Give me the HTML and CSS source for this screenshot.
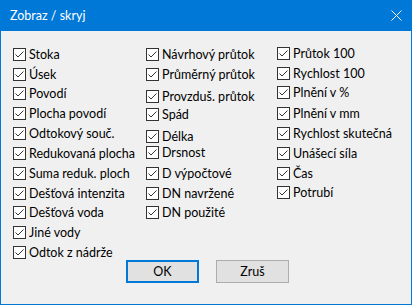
FILE: index.html
```html
<!DOCTYPE html>
<html>
<head>
<meta charset="utf-8">
<link rel="stylesheet" href="styles.css">
</head>
<body>
<div class="window">
  <div class="titlebar">
    <span class="title">Zobraz / skryj</span>
    <svg class="close" width="11" height="11" viewBox="0 0 11 11"><path d="M0.5 0.5 L10.5 10.5 M10.5 0.5 L0.5 10.5" stroke="#fff" stroke-width="1" fill="none"/></svg>
  </div>
  <div class="content">
    <div class="columns">
      <div class="col col1">
        <label class="row h20"><span class="cb"></span>Stoka</label>
        <label class="row h19"><span class="cb"></span>Úsek</label>
        <label class="row h20"><span class="cb"></span>Povodí</label>
        <label class="row h20"><span class="cb"></span>Plocha povodí</label>
        <label class="row h20"><span class="cb"></span>Odtokový souč.</label>
        <label class="row h20"><span class="cb"></span>Redukovaná plocha</label>
        <label class="row h20"><span class="cb"></span>Suma reduk. ploch</label>
        <label class="row h19"><span class="cb"></span>Dešťová intenzita</label>
        <label class="row h20"><span class="cb"></span>Dešťová voda</label>
        <label class="row h20"><span class="cb"></span>Jiné vody</label>
        <label class="row h20"><span class="cb"></span>Odtok z nádrže</label>
      </div>
      <div class="col col2">
        <label class="row h20"><span class="cb"></span>Návrhový průtok</label>
        <label class="row h22"><span class="cb"></span>Průměrný průtok</label>
        <label class="row h18"><span class="cb"></span>Provzduš. průtok</label>
        <label class="row h22"><span class="cb"></span>Spád</label>
        <label class="row h16"><span class="cb"></span>Délka</label>
        <label class="row h21"><span class="cb"></span>Drsnost</label>
        <label class="row h20"><span class="cb"></span>D výpočtové</label>
        <label class="row h19"><span class="cb"></span>DN navržené</label>
        <label class="row h20"><span class="cb"></span>DN použité</label>
      </div>
      <div class="col col3">
        <label class="row h20"><span class="cb"></span>Průtok 100</label>
        <label class="row h19"><span class="cb"></span>Rychlost 100</label>
        <label class="row h21"><span class="cb"></span>Plnění v %</label>
        <label class="row h20"><span class="cb"></span>Plnění v mm</label>
        <label class="row h20"><span class="cb"></span>Rychlost skutečná</label>
        <label class="row h20"><span class="cb"></span>Unášecí síla</label>
        <label class="row h19"><span class="cb"></span>Čas</label>
        <label class="row h20"><span class="cb"></span>Potrubí</label>
      </div>
    </div>
    <div class="buttons">
      <button class="btn default">OK</button>
      <button class="btn">Zruš</button>
    </div>
  </div>
</div>
</body>
</html>
```

FILE: styles.css
```css
* { box-sizing: border-box; }
html, body { margin: 0; padding: 0; }
body {
  width: 412px;
  height: 305px;
  overflow: hidden;
  font-family: "Lato", "Noto Sans", sans-serif;
  font-size: 12.5px;
  color: #000;
}
.window {
  width: 412px;
  height: 305px;
  border: 1px solid #0078d7;
  border-top: none;
  background: #f0f0f0;
  display: flex;
  flex-direction: column;
}
.titlebar {
  height: 31px;
  margin: 0 -1px;
  background: #0078d7;
  display: flex;
  align-items: center;
  justify-content: space-between;
  padding: 0 10px 1px 10px;
  color: #fff;
}
.title {
  font-size: 12.5px;
}
.close {
  margin-right: 0;
}
.content {
  flex: 1;
  display: flex;
  flex-direction: column;
  padding: 17px 0 0 12px;
}
.columns {
  display: grid;
  grid-template-columns: 133px 131px 1fr;
  height: 212px;
}
.col {
  display: flex;
  flex-direction: column;
}
.col3 { margin-top: -1px; }
.row {
  display: flex;
  align-items: flex-start;
  gap: 3px;
  line-height: 13px;
  white-space: nowrap;
}
.h16 { height: 16px; }
.h18 { height: 18px; }
.h19 { height: 19px; }
.h20 { height: 20px; }
.h21 { height: 21px; }
.h22 { height: 22px; }
.cb {
  flex: none;
  width: 13px;
  height: 13px;
  border: 1px solid #333;
  background: #fff url("data:image/svg+xml;utf8,<svg xmlns='http://www.w3.org/2000/svg' width='11' height='11' viewBox='0 0 11 11'><path d='M1.5 5.5 L4 8 L9.5 2.5' stroke='%23333' stroke-width='1' fill='none'/></svg>") no-repeat center;
}
.buttons {
  display: flex;
  gap: 17px;
  margin-left: 113px;
}
.btn {
  width: 73px;
  height: 23px;
  background: #e1e1e1;
  border: 1px solid #adadad;
  font-family: inherit;
  font-size: 12.5px;
  color: #000;
  padding: 0;
}
.btn.default {
  border: 2px solid #0078d7;
}
```
